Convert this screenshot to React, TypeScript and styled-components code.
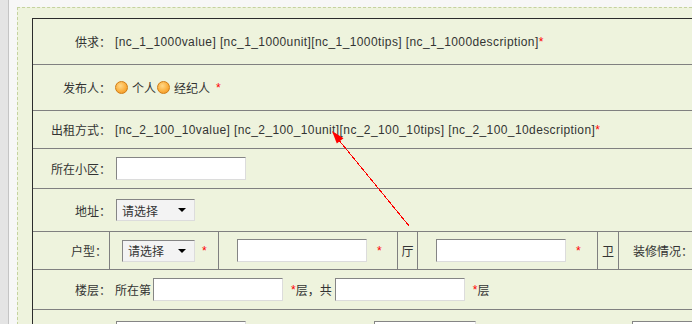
import React, { FunctionComponent } from "react";
import styled, { createGlobalStyle } from "styled-components";

const GlobalStyle = createGlobalStyle`
  html, body {
    margin: 0;
    padding: 0;
    overflow: hidden;
    background: #f7f7f7;
  }
  body {
    font-family: "Liberation Sans", "Noto Sans CJK SC", sans-serif;
    font-size: 12px;
    color: #333;
  }
`;

const Page = styled.div`
  position: relative;
  display: flex;
  width: 692px;
  height: 324px;
  overflow: hidden;
`;

const SideStrip = styled.div`
  flex: 0 0 8px;
  background: #e4e4e4;
  border-right: 1px solid #c4c4c4;
`;

const Workspace = styled.div`
  flex: 1;
  min-width: 0;
  padding: 7px 0 0 8px;
  background: #f7f7f7;
`;

const Panel = styled.div`
  height: 100%;
  padding: 10px 0 0 14px;
  background: #eef3dd;
  border-top: 1px dashed #c5d29f;
  border-left: 1px dashed #c5d29f;
`;

const FormTable = styled.div`
  width: 1000px;
  border-top: 1px solid #2b2b2b;
  border-left: 1px solid #2b2b2b;
`;

const Row = styled.div<{ $h: number }>`
  display: flex;
  align-items: center;
  height: ${(p) => p.$h}px;
  border-bottom: 1px solid #808080;
`;

const Label = styled.div`
  flex: 0 0 78px;
  text-align: right;
  white-space: nowrap;
`;

const Value = styled.div`
  display: flex;
  align-items: center;
  padding-left: 4px;
  white-space: nowrap;
`;

const Code = styled.span`
  letter-spacing: 0.4px;
`;

const Required = styled.span<{ $ml?: number }>`
  color: #ff0000;
  font-family: "Liberation Sans", sans-serif;
  margin-left: ${(p) => p.$ml ?? 0}px;
`;

const Radio = styled.span`
  display: inline-block;
  width: 13px;
  height: 13px;
  box-sizing: border-box;
  border-radius: 50%;
  border: 1px solid #d07c14;
  background: radial-gradient(
    circle at 40% 35%,
    #ffd888 0%,
    #fbb040 55%,
    #ec8e1c 100%
  );
  margin-right: 4px;
`;

const RadioText = styled.span`
  margin-right: 1px;
`;

const TextInput = styled.input<{ $w?: number; $ml?: number }>`
  box-sizing: border-box;
  width: ${(p) => p.$w ?? 130}px;
  height: 23px;
  margin: 0 0 0 ${(p) => p.$ml ?? 0}px;
  padding: 0 3px;
  background: #fff;
  border-top: 1px solid #858585;
  border-left: 1px solid #858585;
  border-bottom: 1px solid #dcdcdc;
  border-right: 1px solid #dcdcdc;
  outline: none;
  font: inherit;
`;

const FakeSelect = styled.div<{ $w: number }>`
  box-sizing: border-box;
  display: flex;
  align-items: center;
  justify-content: space-between;
  width: ${(p) => p.$w}px;
  height: 22px;
  padding: 0 8px 0 5px;
  background: #f3f3f3;
  border-top: 1px solid #858585;
  border-left: 1px solid #858585;
  border-bottom: 1px solid #dcdcdc;
  border-right: 1px solid #dcdcdc;
  color: #333;
`;

const Caret = styled.span`
  width: 0;
  height: 0;
  border-top: 4px solid #000;
  border-left: 4px solid transparent;
  border-right: 4px solid transparent;
`;

const SplitRow = styled.div`
  display: flex;
  align-items: stretch;
  height: 37px;
  border-bottom: 1px solid #808080;
`;

const Cell = styled.div<{ $w?: number; $pl?: number; $center?: boolean }>`
  box-sizing: border-box;
  display: flex;
  align-items: center;
  justify-content: ${(p) => (p.$center ? "center" : "flex-start")};
  flex: ${(p) => (p.$w ? `0 0 ${p.$w}px` : "1")};
  padding-left: ${(p) => p.$pl ?? 0}px;
  border-right: 1px solid #808080;
  white-space: nowrap;
  &:last-child {
    border-right: none;
  }
`;

const CellLabel = styled(Cell)`
  justify-content: flex-end;
  padding-right: 2px;
`;

const Gap = styled.span<{ $w: number }>`
  display: inline-block;
  width: ${(p) => p.$w}px;
`;

const ArrowLayer = styled.svg`
  position: absolute;
  left: 0;
  top: 0;
  pointer-events: none;
`;

const Select: FunctionComponent<{ width: number }> = ({ width }) => (
  <FakeSelect $w={width}>
    <span>请选择</span>
    <Caret />
  </FakeSelect>
);

const App: FunctionComponent = () => {
  return (
    <Page>
      <GlobalStyle />
      <SideStrip />
      <Workspace>
        <Panel>
          <FormTable>
            <Row $h={45}>
              <Label>供求：</Label>
              <Value>
                <Code>
                  [nc_1_1000value] [nc_1_1000unit][nc_1_1000tips]
                  [nc_1_1000description]
                </Code>
                <Required>*</Required>
              </Value>
            </Row>
            <Row $h={45}>
              <Label>发布人：</Label>
              <Value>
                <Radio />
                <RadioText>个人</RadioText>
                <Radio />
                <span>经纪人</span>
                <Required $ml={6}>*</Required>
              </Value>
            </Row>
            <Row $h={37}>
              <Label>出租方式：</Label>
              <Value>
                <Code>
                  [nc_2_100_10value] [nc_2_100_10unit][nc_2_100_10tips]
                  [nc_2_100_10description]
                </Code>
                <Required>*</Required>
              </Value>
            </Row>
            <Row $h={39}>
              <Label>所在小区：</Label>
              <Value>
                <TextInput $ml={1} />
              </Value>
            </Row>
            <Row $h={42}>
              <Label>地址：</Label>
              <Value>
                <Gap $w={1} />
                <Select width={79} />
              </Value>
            </Row>
            <SplitRow>
              <CellLabel $w={77}>户型：</CellLabel>
              <Cell $w={109} $pl={12}>
                <Select width={73} />
                <Required $ml={7}>*</Required>
              </Cell>
              <Cell $w={179} $pl={18}>
                <TextInput />
                <Required $ml={10}>*</Required>
              </Cell>
              <Cell $w={20} $center>
                厅
              </Cell>
              <Cell $w={180} $pl={18}>
                <TextInput />
                <Required $ml={10}>*</Required>
              </Cell>
              <Cell $w={21} $center>
                卫
              </Cell>
              <Cell $pl={14}>装修情况：</Cell>
            </SplitRow>
            <Row $h={39}>
              <Label>楼层：</Label>
              <Value>
                所在第
                <TextInput $ml={2} />
                <Required $ml={8}>*</Required>
                层，共
                <TextInput $ml={3} />
                <Required $ml={8}>*</Required>层
              </Value>
            </Row>
            <Row $h={45}>
              <Label />
              <Value>
                <TextInput $ml={1} />
                <TextInput $w={102} $ml={128} />
                <TextInput $ml={156} />
              </Value>
            </Row>
          </FormTable>
        </Panel>
      </Workspace>
      <ArrowLayer width={692} height={324} viewBox="0 0 692 324">
        <line
          x1={409.5}
          y1={226.5}
          x2={338}
          y2={139}
          stroke="#ff0000"
          strokeWidth={1}
          shapeRendering="crispEdges"
        />
        <polygon points="332,131 336.8,143.5 343.5,138.2" fill="#ff0000" />
      </ArrowLayer>
    </Page>
  );
};

export default App;
